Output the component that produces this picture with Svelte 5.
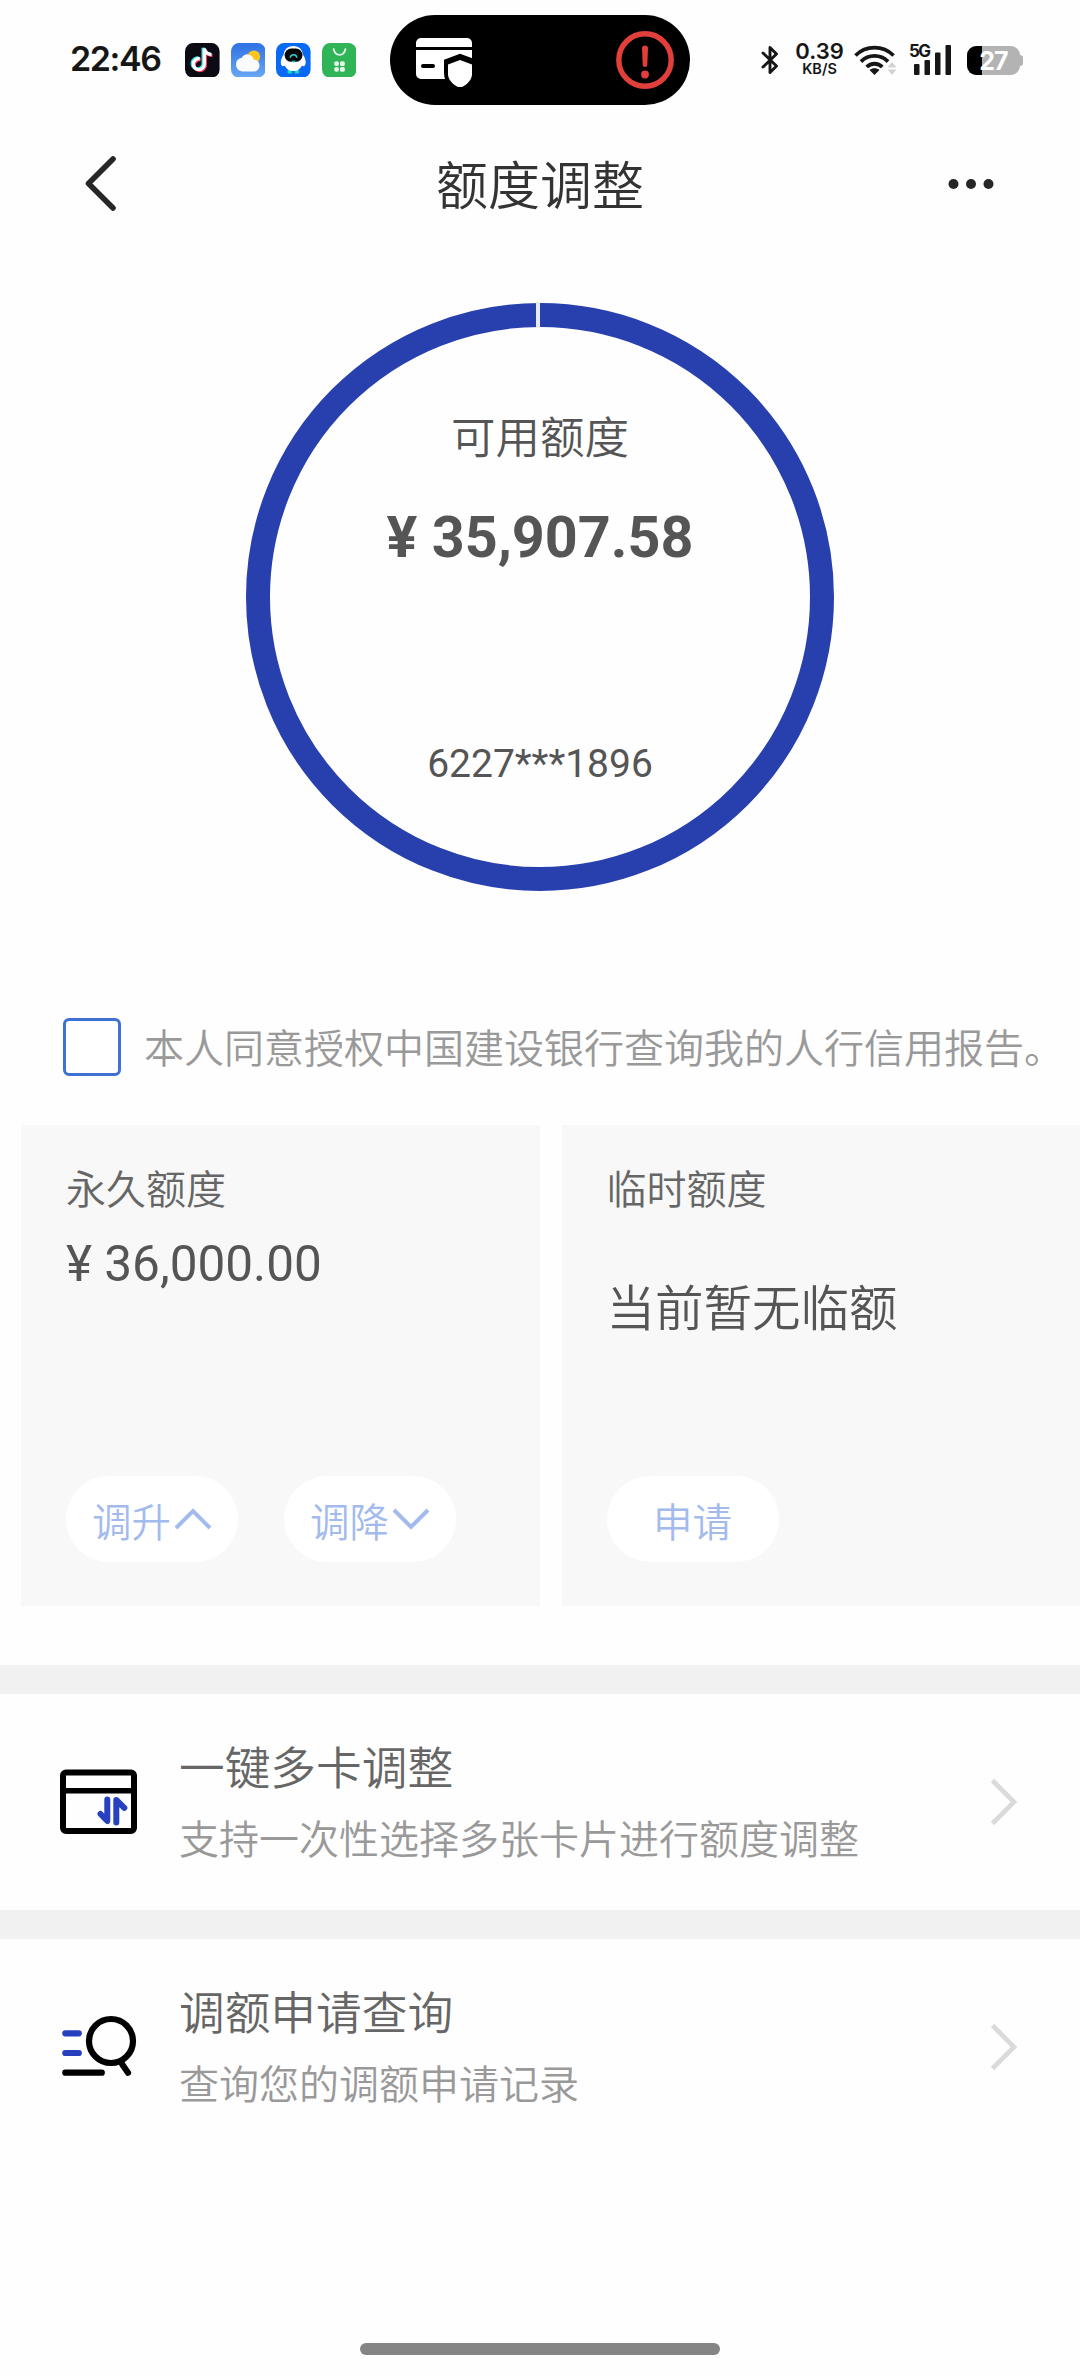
<script>
	let agreed = $state(false);

	const account = {
		available: "35,907.58",
		card: "6227***1896",
		permanent: "36,000.00",
	};

	const entries = [
		{
			icon: "card",
			title: "一键多卡调整",
			desc: "支持一次性选择多张卡片进行额度调整",
		},
		{
			icon: "search",
			title: "调额申请查询",
			desc: "查询您的调额申请记录",
		},
	];
</script>

<div class="page">
	<div class="status">
		<div class="status-left">
			<span class="time">22:46</span>
			<div class="apps">
				<svg viewBox="0 0 34 34">
					<rect width="34" height="34" rx="8" fill="#0c0b14" />
					<g fill="none" stroke-width="3.2">
						<path d="M14.5 15.500a5.400 5.400 0 1 0 4.500 5V5.500c.6 3.600 3 5.600 7 6" transform="translate(-1.200 -.8)" stroke="#25e4e0" />
						<path d="M14.500 15.500a5.400 5.400 0 1 0 4.500 5V5.500c.6 3.600 3 5.600 7 6" transform="translate(1 .8)" stroke="#f8345c" />
						<path d="M14.500 15.500a5.400 5.400 0 1 0 4.500 5V5.500c.6 3.600 3 5.600 7 6" stroke="#fff" />
					</g>
				</svg>
				<svg viewBox="0 0 34 34">
					<defs>
						<linearGradient id="sky" x1="0" y1="0" x2="0" y2="1">
							<stop offset="0" stop-color="#2f70e5" />
							<stop offset="1" stop-color="#69a8f2" />
						</linearGradient>
					</defs>
					<rect width="34" height="34" rx="8" fill="url(#sky)" />
					<circle cx="22.500" cy="13.500" r="6.200" fill="#fcc522" />
					<path d="M11 28a6.500 6.500 0 0 1-6-7c0-4 3-6.200 5.500-6.200 1.500-3 4-4 6.500-3.600 3 .4 5 2.800 5.300 5.300 3.500 0 5.700 2.500 5.700 5.500S25.500 28 22.500 28z" fill="#fafbff" />
				</svg>
				<svg viewBox="0 0 34 34">
					<rect width="34" height="34" rx="8" fill="#0869f5" />
					<path d="M13.500 26v4M20.500 26v4" stroke="#16dcc2" stroke-width="4" />
					<path d="M17 3c6 0 9 4 9.500 8.500C29 15 30 19 28.500 22c-1 1-2 1-3 0-2 4-5 5.500-8.500 5.500S10.500 26 8.500 22c-1 1-2 1-3 0C4 19 5 15 7.500 11.500 8 7 11 3 17 3z" fill="#fff" />
					<rect x="8.500" y="5.500" width="17.500" height="13" rx="6.500" fill="#06080c" />
					<path d="M14 14.500c.5-4 6-4 6.500 0" fill="none" stroke="#35d5d0" stroke-width="1.500" />
					<path d="M15 17.500h4.500l-2.200 2z" fill="#16dcc2" />
				</svg>
				<svg viewBox="0 0 34 34">
					<rect width="34" height="34" rx="8" fill="#2fb457" />
					<path d="M11.500 6c1.500 7.500 10 7.500 11.500 0" fill="none" stroke="#e9f9ee" stroke-width="1.800" stroke-linecap="round" />
					<g fill="#e4f6e9">
						<rect x="12" y="18" width="4.700" height="4.700" rx="2" />
						<rect x="17.700" y="18" width="4.700" height="4.700" rx="1.500" />
						<rect x="12" y="23.500" width="4.700" height="4.700" rx="2" />
						<rect x="17.700" y="23.500" width="4.700" height="4.700" rx="1.500" />
					</g>
				</svg>
			</div>
		</div>

		<div class="island">
			<svg width="60" height="54" viewBox="0 0 60 54">
				<path d="M6 5h46a5 5 0 0 1 5 5v4H1v-4a5 5 0 0 1 5-5zM1 17h56v24a5 5 0 0 1-5 5H6a5 5 0 0 1-5-5z" fill="#fff" />
				<path d="M8 33h10" stroke="#000" stroke-width="4" stroke-linecap="round" />
				<path d="M45 25l12 4.500V40c0 7-5 12-12 14.700C38 52 33 47 33 40V29.500z" fill="#fff" stroke="#000" stroke-width="8" />
				<path d="M45 27l12 4.500V41c0 6-5 11-12 14-7-3-12-8-12-14v-9.500z" fill="#fff" />
				<path d="M57.500 20h3v35h-3z" fill="#000" />
			</svg>
			<svg width="58" height="58" viewBox="0 0 58 58">
				<circle cx="29" cy="29" r="26.200" fill="none" stroke="#e03f3b" stroke-width="5.400" />
				<path d="M26 17c0-3.500 6-3.500 6 0l-.7 17c-.2 2.500-4.400 2.500-4.600 0z" fill="#e03f3b" />
				<circle cx="29" cy="43.500" r="3.900" fill="#e03f3b" />
			</svg>
		</div>

		<div class="status-right">
			<svg width="18" height="32" viewBox="0 0 18 32">
				<path d="M2 9l13.500 13L9 28.500v-25L15.500 10 2 23" fill="none" stroke="#161616" stroke-width="2.900" stroke-linejoin="round" stroke-linecap="round" />
			</svg>
			<div class="speed">
				<span class="num">0.39</span>
				<span class="unit">KB/S</span>
			</div>
			<svg width="43" height="32" viewBox="0 0 43 32">
				<g fill="none" stroke="#161616" stroke-width="3.800">
					<path d="M1.500 11.500a27 27 0 0 1 38 0" />
					<path d="M7 17.600a19 19 0 0 1 27 0" />
					<path d="M12.700 23a11 11 0 0 1 15.600 0" />
				</g>
				<path d="M15.500 26c3-2.500 7-2.500 10 0l-5 5z" fill="#161616" />
				<path d="M38 18l4.500 5.500h-9zM38 31l-4.500-5.500h9z" fill="#d2d2d2" />
			</svg>
			<div class="signal">
				<span class="gen">5G</span>
				<svg width="44" height="32" viewBox="0 0 44 32" fill="#161616">
					<rect x="5" y="20" width="5.500" height="11" rx="1" />
					<rect x="15.500" y="16" width="5.500" height="15" rx="1" />
					<rect x="26" y="8.500" width="5.500" height="22.500" rx="1" />
					<rect x="36.500" y="1" width="5.500" height="30" rx="1" />
				</svg>
			</div>
			<div class="battery"><span>27</span></div>
		</div>
	</div>

	<header>
		<svg width="40" height="60" viewBox="0 0 40 60">
			<path d="M32 4L7.500 28.500 32 53" fill="none" stroke="#262626" stroke-width="5.600" stroke-linecap="round" stroke-linejoin="round" />
		</svg>
		<h1>额度调整</h1>
		<svg width="46" height="12" viewBox="0 0 46 12" fill="#262626">
			<circle cx="5.500" cy="5" r="5" />
			<circle cx="23" cy="5" r="5" />
			<circle cx="40.500" cy="5" r="5" />
		</svg>
	</header>

	<div class="ring">
		<span class="ring-label">可用额度</span>
		<span class="ring-amount">¥ {account.available}</span>
		<span class="ring-card">{account.card}</span>
	</div>

	<label class="agree">
		<input type="checkbox" bind:checked={agreed} />
		<span>本人同意授权中国建设银行查询我的人行信用报告。</span>
	</label>

	<div class="limits">
		<div class="limit">
			<span class="limit-label">永久额度</span>
			<span class="limit-amount">¥ {account.permanent}</span>
			<div class="actions">
				<button>
					调升
					<svg width="38" height="26" viewBox="0 0 38 26"><path d="M2 22L19 5l17 17" /></svg>
				</button>
				<button>
					调降
					<svg width="38" height="26" viewBox="0 0 38 26"><path d="M2 4l17 17L36 4" /></svg>
				</button>
			</div>
		</div>
		<div class="limit">
			<span class="limit-label">临时额度</span>
			<span class="limit-none">当前暂无临额</span>
			<div class="actions">
				<button>申请</button>
			</div>
		</div>
	</div>

	<div class="entries">
		{#each entries as item (item.icon)}
			<div class="entry">
				{#if item.icon === "card"}
					<svg width="80" height="70" viewBox="0 0 80 70" fill="none" stroke-width="6">
						<rect x="4" y="5.500" width="71" height="58.500" rx="3" stroke="#000" />
						<path d="M4 23.800h71" stroke="#000" stroke-width="5.500" />
						<path d="M41.500 47l6.800 7V32.500M57.300 55.500V33l8 7.800" stroke="#2740c0" stroke-linecap="round" stroke-linejoin="round" />
					</svg>
				{:else}
					<svg width="80" height="70" viewBox="0 0 80 70" fill="none" stroke-width="6.200" stroke-linecap="round">
						<path d="M6.300 21.300h13.500M6.300 41h13.500" stroke="#2740c0" />
						<path d="M6.300 60.700h36.500M63 52l6 8.700" stroke="#000" />
						<circle cx="52" cy="29" r="22" stroke="#000" />
					</svg>
				{/if}
				<div class="entry-text">
					<span class="entry-title">{item.title}</span>
					<span class="entry-desc">{item.desc}</span>
				</div>
				<svg width="30" height="50" viewBox="0 0 30 50">
					<path d="M3.500 3.500L25 25 3.500 46.500" fill="none" stroke="#dadada" stroke-width="4.600" />
				</svg>
			</div>
		{/each}
	</div>

	<div class="home-bar"></div>
</div>

<style>
	:global(body) {
		margin: 0;
		background: #fefefe;
	}
	.page {
		width: 1080px;
		height: 2376px;
		display: flex;
		flex-direction: column;
		overflow: hidden;
		background: #fefefe;
		color: #555;
		font-family: Roboto, "Noto Sans CJK SC", sans-serif;
		font-weight: 350;
	}
	svg {
		display: block;
		flex: none;
	}

	.status {
		display: grid;
		grid-template-columns: 390px 300px 390px;
		align-items: center;
		height: 120px;
		color: #161616;
		font-family: Inter, sans-serif;
	}
	.status-left {
		display: flex;
		align-items: center;
		padding-left: 70px;
	}
	.time {
		width: 115px;
		font-size: 34px;
		font-weight: 600;
		line-height: 40px;
		letter-spacing: -1.4px;
		margin-top: -3px;
	}
	.apps {
		display: flex;
		gap: 11px;
	}
	.apps svg {
		width: 34.6px;
		height: 34.6px;
	}
	.island {
		display: flex;
		justify-content: space-between;
		align-items: center;
		height: 90px;
		box-sizing: border-box;
		padding: 0 16px 0 25px;
		border-radius: 45px;
		background: #000;
	}
	.status-right {
		display: flex;
		align-items: center;
		padding-left: 71px;
		height: 32px;
	}
	.speed {
		display: flex;
		flex-direction: column;
		align-items: center;
		width: 51px;
		margin: -2px 9px 0 15px;
		font-weight: 600;
	}
	.num {
		font-size: 22px;
		line-height: 18px;
	}
	.unit {
		margin-top: 2px;
		font-size: 14.5px;
		line-height: 14px;
	}
	.signal {
		display: flex;
		position: relative;
		margin: 0 14px 0 12px;
	}
	.gen {
		position: absolute;
		left: 0;
		top: -1px;
		font-size: 17px;
		line-height: 17px;
		font-weight: 700;
		letter-spacing: -1.5px;
	}
	.battery {
		position: relative;
		width: 53px;
		height: 29px;
		border-radius: 9px;
		background: linear-gradient(90deg, #000 15px, #b3b3b3 15px);
		color: #fff;
		text-align: center;
		font-size: 25px;
		font-weight: 700;
		line-height: 30px;
		letter-spacing: -1px;
	}
	.battery::after {
		content: "";
		position: absolute;
		right: -3px;
		top: 9px;
		width: 3px;
		height: 11px;
		border-radius: 0 3px 3px 0;
		background: #b3b3b3;
	}

	header {
		display: grid;
		grid-template-columns: 1fr auto 1fr;
		align-items: center;
		height: 130px;
		padding: 0 86px 0 81px;
	}
	header svg:last-child {
		justify-self: end;
	}
	h1 {
		margin: 0;
		padding: 5px 0 0 5px;
		color: #333;
		font-size: 52px;
		font-weight: 350;
		line-height: 60px;
	}

	.ring {
		position: relative;
		display: flex;
		flex-direction: column;
		align-items: center;
		align-self: center;
		box-sizing: border-box;
		width: 588px;
		height: 588px;
		margin-top: 53px;
		padding-top: 82px;
		border: 24px solid #2840ae;
		border-radius: 50%;
	}
	.ring::before {
		content: "";
		position: absolute;
		top: -25px;
		left: 265.5px;
		width: 4px;
		height: 26px;
		background: #e6e8fb;
	}
	.ring-label {
		font-size: 44.5px;
		line-height: 60px;
	}
	.ring-amount {
		margin-top: 34px;
		font-size: 57.5px;
		font-weight: 700;
		line-height: 70px;
	}
	.ring-card {
		margin-top: 166px;
		font-size: 39px;
		font-weight: 400;
		line-height: 50px;
	}

	.agree {
		display: flex;
		align-items: center;
		gap: 23px;
		height: 58px;
		margin: 127px 0 49px 63px;
		color: #999;
		font-size: 40px;
		line-height: 58px;
		white-space: nowrap;
	}
	.agree span {
		padding-top: 5px;
	}
	.agree input {
		appearance: none;
		flex: none;
		box-sizing: border-box;
		width: 58px;
		height: 58px;
		margin: 0;
		border: 3px solid #3f70d4;
		border-radius: 6px;
		background: #fff;
	}
	.agree input:checked {
		background: #3f70d4;
	}

	.limits {
		display: flex;
		gap: 22px;
		padding-left: 21px;
	}
	.limit {
		display: flex;
		flex-direction: column;
		flex: 1;
		box-sizing: border-box;
		height: 481px;
		padding: 41px 0 44px 45px;
		background: #f8f8f8;
	}
	.limit-label {
		color: #666;
		font-size: 40px;
		line-height: 50px;
	}
	.limit-amount {
		margin-top: 18px;
		font-size: 49.5px;
		font-weight: 400;
		line-height: 60px;
	}
	.limit-none {
		margin-top: 64px;
		font-size: 48.5px;
		line-height: 60px;
	}
	.actions {
		display: flex;
		gap: 46px;
		margin-top: auto;
	}
	button {
		display: flex;
		align-items: center;
		justify-content: center;
		gap: 3px;
		width: 172px;
		height: 86px;
		padding: 0;
		border: 0;
		border-radius: 43px;
		background: #fff;
		color: #a3bbec;
		font: inherit;
		font-size: 39.5px;
	}
	button path {
		fill: none;
		stroke: #a3bbec;
		stroke-width: 4;
	}

	.entries {
		margin-top: 59px;
	}
	.entry {
		display: flex;
		align-items: center;
		height: 216px;
		padding: 0 61px 0 59px;
		border-top: 29px solid #f1f1f1;
	}
	.entry-text {
		display: flex;
		flex-direction: column;
		flex: 1;
		gap: 18px;
		padding: 3px 0 0 40px;
	}
	.entry-title {
		color: #666;
		font-size: 45.7px;
		line-height: 56px;
	}
	.entry-desc {
		color: #999;
		font-size: 40px;
		line-height: 50px;
	}

	.home-bar {
		align-self: center;
		width: 360px;
		height: 12px;
		margin: auto 0 21px;
		border-radius: 6px;
		background: #858585;
	}
</style>
